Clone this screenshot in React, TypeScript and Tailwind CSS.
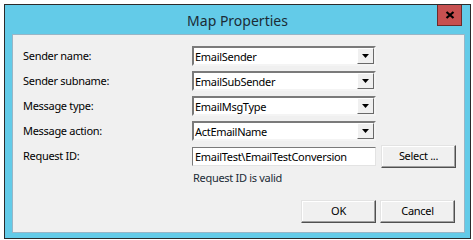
import React from 'react';

const fields = [
  { label: 'Sender name:', value: 'EmailSender' },
  { label: 'Sender subname:', value: 'EmailSubSender' },
  { label: 'Message type:', value: 'EmailMsgType' },
  { label: 'Message action:', value: 'ActEmailName' },
];

const ComboBox: React.FC<{ value: string }> = ({ value }) => (
  <div className="w-[184px] h-[20px] flex items-stretch bg-white border-2 border-t-[#7a7a7a] border-l-[#7a7a7a] border-r-[#f4f4f4] border-b-[#f4f4f4]">
    <div className="flex-1 flex items-center pl-[1px] leading-none">{value}</div>
    <div className="w-[17px] flex items-center justify-center bg-[#f0f0f0] border border-t-white border-l-white border-r-[#696969] border-b-[#696969]">
      <svg width="7" height="4" viewBox="0 0 7 4">
        <polygon points="0,0 7,0 3.5,4" fill="#000" />
      </svg>
    </div>
  </div>
);

const Button: React.FC<{ children: React.ReactNode; className?: string }> = ({ children, className }) => (
  <div
    className={
      'w-[75px] h-[23px] flex items-center justify-center bg-[#f0f0f0] border border-t-[#e3e3e3] border-l-[#e3e3e3] border-r-[#505050] border-b-[#505050] shadow-[inset_-1px_-1px_0_#a0a0a0,inset_1px_1px_0_#ffffff] ' +
      (className ?? '')
    }
  >
    {children}
  </div>
);

const App: React.FC = () => {
  return (
    <div className="w-[473px] h-[240px] bg-white pt-[4px] pl-[4px] font-['Noto_Sans',sans-serif] text-[11px] tracking-[-0.3px] text-black">
      <div className="w-[467px] h-[235px] border border-[#2b2b2b] bg-[#63cbe8] flex flex-col">
        {/* title bar */}
        <div className="h-[29px] flex items-start relative">
          <div className="flex-1 text-center text-[14px] tracking-normal text-[#1b2b36] pt-[5px]">Map Properties</div>
          <div className="absolute right-[8px] top-0 w-[25px] h-[21px] bg-[#c75050] border border-t-0 border-[#6b2b2b] flex items-center justify-center">
            <svg width="10" height="8" viewBox="0 0 10 8">
              <path d="M1.5 1 L8.5 7 M8.5 1 L1.5 7" stroke="#000" strokeWidth="2.2" />
            </svg>
          </div>
        </div>
        {/* client area */}
        <div className="ml-[7px] mr-[5px] mb-[5px] flex-1 bg-[#f0f0f0] border border-[#98b6c7] pl-[10px] pt-[11px]">
          <div className="flex flex-col gap-[5px]">
            {fields.map(f => (
              <div key={f.label} className="flex items-center h-[20px]">
                <div className="w-[169px]">{f.label}</div>
                <ComboBox value={f.value} />
              </div>
            ))}
            <div className="flex items-center h-[20px]">
              <div className="w-[169px]">Request ID:</div>
              <div className="w-[184px] h-[19px] flex items-center pl-[2px] bg-white border border-t-[#7a7a7a] border-l-[#7a7a7a] border-r-[#e3e3e3] border-b-[#e3e3e3] leading-none">
                EmailTest\EmailTestConversion
              </div>
              <Button className="ml-[5px]">Select ...</Button>
            </div>
          </div>
          <div className="pl-[170px] pt-[4px] text-[#1b2b36]">Request ID is valid</div>
          <div className="flex justify-end gap-[4px] pr-[9px] pt-[13px]">
            <Button className="w-[74px]">OK</Button>
            <Button>Cancel</Button>
          </div>
        </div>
      </div>
    </div>
  );
};

export default App;
